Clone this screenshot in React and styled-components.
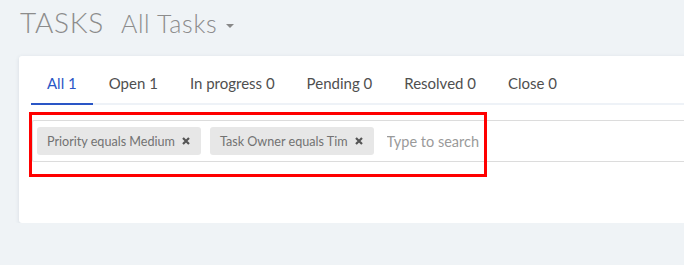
import React from "react";
import styled, { createGlobalStyle } from "styled-components";

const Global = createGlobalStyle`
  html, body { margin: 0; padding: 0; }
  body {
    background: #eff3f6;
    overflow: hidden;
    font-family: "Lato", "Open Sans", sans-serif;
  }
`;

const Page = styled.div`
  padding: 5px 0 0 19px;
  width: 760px;
`;

const Header = styled.div`
  display: flex;
  align-items: baseline;
  gap: 17px;
  height: 51px;
  padding-left: 1px;
`;

const Title = styled.h1`
  margin: 0;
  font-family: "Lato", sans-serif;
  font-weight: 300;
  font-size: 28px;
  letter-spacing: 0.7px;
  color: #8c8c8c;
`;

const ViewSelect = styled.div`
  display: flex;
  align-items: center;
  gap: 9px;
  font-family: "Lato", sans-serif;
  font-weight: 300;
  font-size: 25px;
  letter-spacing: 0.7px;
  color: #8c8c8c;
`;

const Caret = styled.span`
  width: 0;
  height: 0;
  border-left: 4px solid transparent;
  border-right: 4px solid transparent;
  border-top: 4px solid #888;
  margin-top: 6px;
`;

const Card = styled.div`
  background: #fff;
  border-radius: 3px;
  box-shadow: 0 1px 4px rgba(40, 60, 90, 0.12);
  padding: 0 0 61px 0;
`;

const TabRow = styled.div`
  display: flex;
  margin: 0 0 0 12px;
  border-bottom: 2px solid #eef2f7;
`;

const Tab = styled.div`
  position: relative;
  display: flex;
  align-items: center;
  box-sizing: border-box;
  height: 47px;
  padding: 6px 16px 0;
  font-size: 15px;
  white-space: nowrap;
  color: ${(p) => (p.$active ? "#2a56c6" : "#4f4f4f")};
  &::after {
    content: "";
    display: ${(p) => (p.$active ? "block" : "none")};
    position: absolute;
    left: 0;
    right: 0;
    bottom: -2px;
    height: 2px;
    background: #2a56c6;
  }
`;

const FilterWrap = styled.div`
  position: relative;
  margin: 15px 0 0 13px;
`;

const FilterBox = styled.div`
  display: flex;
  align-items: center;
  gap: 9px;
  height: 40px;
  padding: 0 4px;
  border: 1px solid #dcdcdc;
  border-right: none;
  border-radius: 2px 0 0 2px;
`;

const Chip = styled.div`
  display: flex;
  align-items: center;
  gap: 7px;
  height: 28px;
  padding: 0 11px 0 10px;
  border-radius: 3px;
  background: #e7e7e7;
  color: #727272;
  font-size: 12.6px;
  white-space: nowrap;
`;

const CloseIcon = styled.svg`
  width: 8px;
  height: 8px;
  flex: none;
`;

const Search = styled.input`
  border: none;
  outline: none;
  background: transparent;
  margin-left: 4px;
  padding: 0;
  font-family: "Lato", sans-serif;
  font-size: 14.5px;
  color: #444;
  width: 140px;
  &::placeholder { color: #9a9a9a; }
`;

const Highlight = styled.div`
  position: absolute;
  left: -3px;
  top: -8px;
  width: 458px;
  height: 65px;
  box-sizing: border-box;
  border: 3px solid #ff0000;
  pointer-events: none;
`;

const tabs = [
  ["All", 1],
  ["Open", 1],
  ["In progress", 0],
  ["Pending", 0],
  ["Resolved", 0],
  ["Close", 0],
];

const filters = ["Priority equals Medium", "Task Owner equals Tim"];

export default function App() {
  return (
    <>
      <Global />
      <Page>
        <Header>
          <Title>TASKS</Title>
          <ViewSelect>
            All Tasks <Caret />
          </ViewSelect>
        </Header>
        <Card>
          <TabRow>
            {tabs.map(([name, n], i) => (
              <Tab key={name} $active={i === 0}>
                {name} {n}
              </Tab>
            ))}
          </TabRow>
          <FilterWrap>
            <FilterBox>
              {filters.map((f) => (
                <Chip key={f}>
                  {f}
                  <CloseIcon viewBox="0 0 8 8">
                    <path d="M1 1 L7 7 M7 1 L1 7" stroke="#555" strokeWidth="2.2" strokeLinecap="butt" />
                  </CloseIcon>
                </Chip>
              ))}
              <Search placeholder="Type to search" />
            </FilterBox>
            <Highlight />
          </FilterWrap>
        </Card>
      </Page>
    </>
  );
}
